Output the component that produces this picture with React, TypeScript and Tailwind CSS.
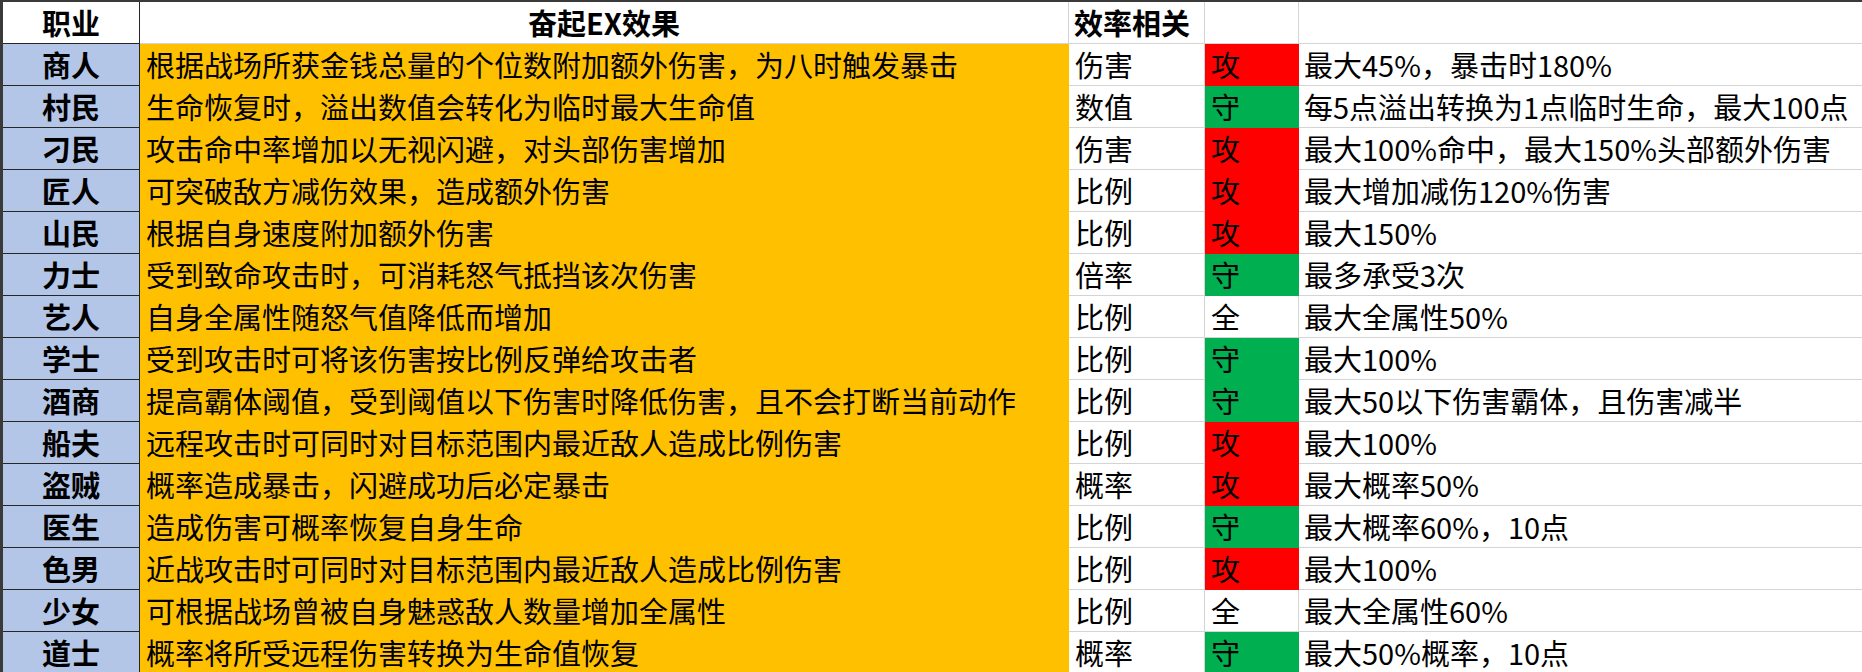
import React from "react";

type Kind = "atk" | "def" | "all";

const rows: [string, string, string, Kind, string][] = [
  ["商人", "根据战场所获金钱总量的个位数附加额外伤害，为八时触发暴击", "伤害", "atk", "最大45%，暴击时180%"],
  ["村民", "生命恢复时，溢出数值会转化为临时最大生命值", "数值", "def", "每5点溢出转换为1点临时生命，最大100点"],
  ["刁民", "攻击命中率增加以无视闪避，对头部伤害增加", "伤害", "atk", "最大100%命中，最大150%头部额外伤害"],
  ["匠人", "可突破敌方减伤效果，造成额外伤害", "比例", "atk", "最大增加减伤120%伤害"],
  ["山民", "根据自身速度附加额外伤害", "比例", "atk", "最大150%"],
  ["力士", "受到致命攻击时，可消耗怒气抵挡该次伤害", "倍率", "def", "最多承受3次"],
  ["艺人", "自身全属性随怒气值降低而增加", "比例", "all", "最大全属性50%"],
  ["学士", "受到攻击时可将该伤害按比例反弹给攻击者", "比例", "def", "最大100%"],
  ["酒商", "提高霸体阈值，受到阈值以下伤害时降低伤害，且不会打断当前动作", "比例", "def", "最大50以下伤害霸体，且伤害减半"],
  ["船夫", "远程攻击时可同时对目标范围内最近敌人造成比例伤害", "比例", "atk", "最大100%"],
  ["盗贼", "概率造成暴击，闪避成功后必定暴击", "概率", "atk", "最大概率50%"],
  ["医生", "造成伤害可概率恢复自身生命", "比例", "def", "最大概率60%，10点"],
  ["色男", "近战攻击时可同时对目标范围内最近敌人造成比例伤害", "比例", "atk", "最大100%"],
  ["少女", "可根据战场曾被自身魅惑敌人数量增加全属性", "比例", "all", "最大全属性60%"],
  ["道士", "概率将所受远程伤害转换为生命值恢复", "概率", "def", "最大50%概率，10点"],
];

const kindLabel: Record<Kind, string> = { atk: "攻", def: "守", all: "全" };
const kindClass: Record<Kind, string> = {
  atk: "bg-[#ff0000] border-[#ff0000]",
  def: "bg-[#00b050] border-[#00b050]",
  all: "bg-white border-[#d4d4d4]",
};

export default function App() {
  return (
    <div
      className="w-[1862px] h-[672px] overflow-hidden bg-white text-black border-t-2 border-l-[3px] border-[#3a3a3a]"
      style={{ fontFamily: '"Noto Sans CJK SC", "Noto Sans", sans-serif' }}
    >
      <div className="grid grid-cols-[137px_929px_136px_94px_1fr] auto-rows-[42px] text-[29px] leading-none">
        {/* header */}
        <div className="flex items-center justify-center font-bold border-r border-b border-[#262626]">职业</div>
        <div className="flex items-center justify-center font-bold border-r border-b border-[#d4d4d4]">奋起EX效果</div>
        <div className="flex items-center pl-[5px] font-bold border-r border-b border-[#d4d4d4]">效率相关</div>
        <div className="border-r border-b border-[#d4d4d4]"></div>
        <div className="border-b border-[#d4d4d4]"></div>

        {rows.map(([job, effect, rel, kind, note]) => (
          <React.Fragment key={job}>
            <div className="flex items-center justify-center font-bold bg-[#b4c6e7] border-r border-b border-[#262626]">
              {job}
            </div>
            <div className="flex items-center pl-[6px] whitespace-nowrap bg-[#ffc000] border-r border-b border-[#ffc000]">
              {effect}
            </div>
            <div className="flex items-center pl-[6px] border-r border-b border-[#d4d4d4]">{rel}</div>
            <div className={`flex items-center pl-[6px] border-r border-b ${kindClass[kind]}`}>
              {kindLabel[kind]}
            </div>
            <div className="flex items-center pl-[5px] whitespace-nowrap border-b border-[#d4d4d4]">{note}</div>
          </React.Fragment>
        ))}
      </div>
    </div>
  );
}
